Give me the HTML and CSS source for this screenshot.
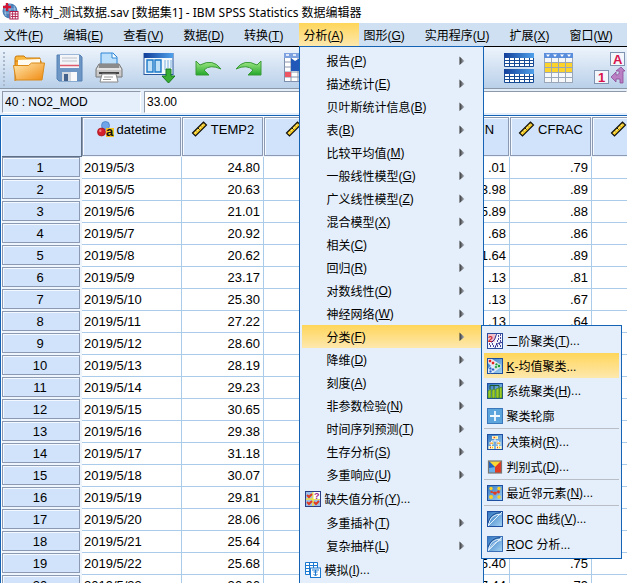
FILE: index.html
```html
<!DOCTYPE html>
<html lang="zh-CN">
<head>
<meta charset="utf-8">
<meta name="viewport" content="width=device-width, initial-scale=1.0">
<title>IBM SPSS Statistics 数据编辑器</title>
<link rel="stylesheet" href="styles.css">
</head>

<body>
<!-- Shared icons -->
<svg class="defs" aria-hidden="true">
	<defs>
		<linearGradient id="g-blue" x1="0" y1="0" x2="1" y2="1"><stop offset="0" stop-color="#2f74c0"/><stop offset="1" stop-color="#a5d4f4"/></linearGradient>
		<linearGradient id="g-head" x1="0" x2="1"><stop offset="0" stop-color="#123f9a"/><stop offset="1" stop-color="#4fa0ea"/></linearGradient>
		<linearGradient id="g-fold" x1="0" y1="0" x2="1" y2="1"><stop offset="0" stop-color="#ffe9b0"/><stop offset="1" stop-color="#f08a10"/></linearGradient>
		<linearGradient id="g-green" x1="0" y1="0" x2="0" y2="1"><stop offset="0" stop-color="#a6ea8a"/><stop offset="1" stop-color="#23a82a"/></linearGradient>
		<linearGradient id="g-arrow" x1="0" x2="1"><stop offset="0" stop-color="#333"/><stop offset="1" stop-color="#b5bcc6"/></linearGradient>
	</defs>
	<symbol id="ruler" viewBox="0 0 16 16">
		<path d="M1 12L12 1l3 3L4 15z" fill="#f9cc1c" stroke="#111" stroke-width="1.2"/>
		<path d="M4 9.500l1.500 1.500M6.500 7l1.500 1.500M9 4.500l1.500 1.500M11.300 2.500l1.200 1.200" stroke="#111"/>
		<path d="M3 12.500L12.500 3" stroke="#fff2a8" stroke-width=".7"/>
	</symbol>
	<symbol id="nominal" viewBox="0 0 17 16">
		<circle cx="8.500" cy="4.500" r="4" fill="#6fa5e8" stroke="#3f74bd" stroke-width=".7"/>
		<circle cx="4.500" cy="11" r="4" fill="#d3202c" stroke="#a31420" stroke-width=".7"/>
		<circle cx="3.300" cy="9.700" r="1.200" fill="#f0848a"/>
		<rect x="9" y="7" width="8" height="9" fill="#f4c224"/>
		<text class="glyph" x="9" y="15" font-size="13">a</text>
	</symbol>
	<symbol id="arrow" viewBox="0 0 6 10"><path d="M.5.500L5.500 5 .5 9z" fill="url(#g-arrow)"/></symbol>
</svg>

<header class="titlebar">
	<svg class="logo" viewBox="0 0 17 17">
		<circle cx="8" cy="8" r="7.500" fill="#4b7fb8"/>
		<path d="M2 6h12M2 10h12M8 1v14M4 3q-2 5 0 10M12 3q2 5 0 10" fill="none" stroke="#a9c8e6" stroke-width=".8"/>
		<path d="M5 0v8M1 4h8" stroke="#d41433" stroke-width="2.400"/>
		<rect x="8" y="8.500" width="8" height="7.500" fill="#fff" stroke="#b01d4c"/>
		<path d="M9 11h7M9 13.500h7M10.600 9v7M13.300 9v7" stroke="#b01d4c" stroke-width=".9"/>
	</svg>
	<h1>*陈村_测试数据.sav [数据集1] - IBM SPSS Statistics 数据编辑器</h1>
</header>

<nav class="menubar">
	<div class="entry"><button>文件(<u>F</u>)</button></div>
	<div class="entry"><button>编辑(<u>E</u>)</button></div>
	<div class="entry"><button>查看(<u>V</u>)</button></div>
	<div class="entry"><button>数据(<u>D</u>)</button></div>
	<div class="entry"><button>转换(<u>T</u>)</button></div>
	<div class="entry open">
		<button aria-expanded="true">分析(<u>A</u>)</button>
		<ul class="menu">
			<li><button>报告(<u>P</u>)<svg class="more"><use href="#arrow"/></svg></button></li>
			<li><button>描述统计(<u>E</u>)<svg class="more"><use href="#arrow"/></svg></button></li>
			<li><button>贝叶斯统计信息(<u>B</u>)<svg class="more"><use href="#arrow"/></svg></button></li>
			<li><button>表(<u>B</u>)<svg class="more"><use href="#arrow"/></svg></button></li>
			<li><button>比较平均值(<u>M</u>)<svg class="more"><use href="#arrow"/></svg></button></li>
			<li><button>一般线性模型(<u>G</u>)<svg class="more"><use href="#arrow"/></svg></button></li>
			<li><button>广义线性模型(<u>Z</u>)<svg class="more"><use href="#arrow"/></svg></button></li>
			<li><button>混合模型(<u>X</u>)<svg class="more"><use href="#arrow"/></svg></button></li>
			<li><button>相关(<u>C</u>)<svg class="more"><use href="#arrow"/></svg></button></li>
			<li><button>回归(<u>R</u>)<svg class="more"><use href="#arrow"/></svg></button></li>
			<li><button>对数线性(<u>O</u>)<svg class="more"><use href="#arrow"/></svg></button></li>
			<li><button>神经网络(<u>W</u>)<svg class="more"><use href="#arrow"/></svg></button></li>
			<li class="active">
				<button aria-expanded="true">分类(<u>F</u>)<svg class="more"><use href="#arrow"/></svg></button>
				<ul class="submenu">
					<li><button>
						<svg class="icon" viewBox="0 0 16 16"><rect x=".5" y=".5" width="15" height="15" fill="#f4f5fd" stroke="#2a4a9c"/><rect x="1" y="1" width="7" height="8" fill="#f3c0c8"/><text class="glyph red" x="1" y="8.500" font-size="9">2</text><path d="M11 3h1M13 2h1M11 6h1M13 5h1M10 8h1M13 8h1M2 11h1M5 11h1M3 13h1M6 13h1M9 11h1M12 11h1M10 13h1M13 13h1" stroke="#141480" stroke-width="1.300"/><path d="M9.500 1q-1 6-5 8.500M15 9.500q-6 0-7 5.500" fill="none" stroke="#141480" stroke-width=".9"/></svg>
						二阶聚类(<u>T</u>)...</button></li>
					<li class="active"><button>
						<svg class="icon" viewBox="0 0 16 16"><rect x=".5" y=".5" width="15" height="15" fill="url(#g-blue)" stroke="#1f4fa0"/><path d="M1 1h4l9 6v2l-8 6H1z" fill="#dceaf7"/><path d="M1 5l3 3-3 3z" fill="#4a8cd0"/><g stroke="#fff" stroke-width=".5"><circle cx="3" cy="3" r="1.700" fill="#e02424"/><circle cx="6" cy="5" r="1.700" fill="#e02424"/><circle cx="9.500" cy="6.500" r="1.500" fill="#1a9a3a"/><circle cx="12" cy="8" r="1.700" fill="#1a9a3a"/><circle cx="9" cy="9" r="1.500" fill="#1a9a3a"/><circle cx="3.500" cy="10.500" r="1.600" fill="#2a62c8"/><circle cx="6" cy="11.500" r="1.600" fill="#2a62c8"/><circle cx="3.500" cy="13.500" r="1.400" fill="#2a62c8"/></g></svg>
						<span><u>K</u>-均值聚类...</span></button></li>
					<li><button>
						<svg class="icon" viewBox="0 0 16 16"><rect x=".5" y=".5" width="15" height="15" fill="url(#g-blue)" stroke="#1f4fa0"/><path d="M3 6V2.500h9V5M7 2.500V6" fill="none" stroke="#1c5a2c"/><path d="M1 8l3-2v9H1zM5 7l3-1v9H5zM9 6l3-1v10H9zM12.500 5l2.500-1v11h-2.500z" fill="#9ccc2a" stroke="#3a7a18" stroke-width=".6"/></svg>
						系统聚类(<u>H</u>)...</button></li>
					<li><button>
						<svg class="icon" viewBox="0 0 16 16"><rect x=".5" y=".5" width="15" height="15" fill="#5ba4dc" stroke="#3a78bb"/><path d="M8 3v10M3 8h10" stroke="#f2f9ff" stroke-width="1.800"/></svg>
						聚类轮廓</button></li>
					<li class="sep"></li>
					<li><button>
						<svg class="icon" viewBox="0 0 16 16"><rect x=".5" y=".5" width="15" height="15" fill="url(#g-blue)" stroke="#1f4fa0"/><path d="M8 5v2M4.500 9V7h7v2M4.500 10v3M11.500 10v3" fill="none" stroke="#fff"/><path d="M5 2h6v3H5zM2.500 8h4v2.500h-4zM9.500 8h4v2.500h-4zM1.500 12h5.500v3H1.500zM9 12h5.500v3H9z" fill="#fff6c4"/><path d="M6.500 3.500h1.500M3.500 9.300h1M10.500 9.300h1M3 13.500h1M10 13.500h1" stroke="#e84a12" stroke-width="1.400"/><path d="M8.500 3.500h1M5 9.300h1M12 9.300h1M5 13.500h1M12 13.500h1" stroke="#f6c51a" stroke-width="1.400"/></svg>
						决策树(<u>R</u>)...</button></li>
					<li><button>
						<svg class="icon" viewBox="0 0 16 16"><rect x="2" y="2" width="6" height="12" fill="#1f63c4"/><rect x="8" y="2" width="6" height="12" fill="#e23b22"/><path d="M2 2h12L8 8z" fill="#fbd832"/><path d="M2 9l6-1v6H2z" fill="#69aee6"/><rect x="1.500" y="2" width="13" height="12" fill="none" stroke="#777" stroke-width="1.200"/></svg>
						判别式(<u>D</u>)...</button></li>
					<li class="sep"></li>
					<li><button>
						<svg class="icon" viewBox="0 0 16 16"><rect x=".5" y=".5" width="15" height="15" fill="url(#g-blue)" stroke="#1f4fa0"/><path d="M5 7l3 1 4-2" fill="none" stroke="#e23b22"/><g fill="#fbd126"><circle cx="4" cy="3.500" r="1.700"/><circle cx="12" cy="3.500" r="1.700"/><circle cx="4" cy="12" r="2"/><circle cx="12" cy="12" r="1.700"/></g><circle cx="8" cy="8.200" r="1.600" fill="#e23b22"/><circle cx="4.500" cy="7" r="1.100" fill="#e23b22"/><circle cx="11.500" cy="7" r="1.400" fill="#e23b22"/></svg>
						最近邻元素(<u>N</u>)...</button></li>
					<li class="sep"></li>
					<li><button>
						<svg class="icon" viewBox="0 0 16 16"><rect x=".5" y=".5" width="15" height="15" fill="url(#g-blue)" stroke="#1f4fa0"/><path d="M1 15L15 1M1.500 14Q3 3 14.500 3" fill="none" stroke="#e4f2fc"/><path d="M1 12Q3 2 14 1.500" fill="none" stroke="#1b4c90"/></svg>
						ROC 曲线(<u>V</u>)...</button></li>
					<li><button>
						<svg class="icon" viewBox="0 0 16 16"><rect x=".5" y=".5" width="15" height="15" fill="url(#g-blue)" stroke="#3a70b8"/><path d="M1 15L15 1M1.500 14Q3 3 14.500 3M1.500 14Q6 6 14.500 4" fill="none" stroke="#e4f2fc" stroke-width=".9"/><path d="M1 11Q4 2 13 1.500" fill="none" stroke="#1b4c90"/></svg>
						<span><u>R</u>OC 分析...</span></button></li>
				</ul>
			</li>
			<li><button>降维(<u>D</u>)<svg class="more"><use href="#arrow"/></svg></button></li>
			<li><button>刻度(<u>A</u>)<svg class="more"><use href="#arrow"/></svg></button></li>
			<li><button>非参数检验(<u>N</u>)<svg class="more"><use href="#arrow"/></svg></button></li>
			<li><button>时间序列预测(<u>T</u>)<svg class="more"><use href="#arrow"/></svg></button></li>
			<li><button>生存分析(<u>S</u>)<svg class="more"><use href="#arrow"/></svg></button></li>
			<li><button>多重响应(<u>U</u>)<svg class="more"><use href="#arrow"/></svg></button></li>
			<li class="with-icon"><button>
				<svg class="icon" viewBox="0 0 16 16"><rect x=".5" y=".5" width="15" height="15" fill="#9cc0ea" stroke="#2a3f86"/><path d="M1 8h14M8 1v14" stroke="#f5e23c" stroke-width="1.500"/><path d="M2 4l2 2 3-3M2 11l2 2 3-3M9 11l2 2 3-3" fill="none" stroke="#e03a22" stroke-width="2"/><rect x="8.500" y="1" width="6.500" height="7" fill="#fff"/><text class="glyph purple" x="9" y="7.500" font-size="9">?</text></svg>
				缺失值分析(<u>Y</u>)...</button></li>
			<li><button>多重插补(<u>T</u>)<svg class="more"><use href="#arrow"/></svg></button></li>
			<li><button>复杂抽样(<u>L</u>)<svg class="more"><use href="#arrow"/></svg></button></li>
			<li class="with-icon"><button>
				<svg class="icon" viewBox="0 0 16 16"><path d="M.5.500h12v12H.5zM.5 3.500h12M.5 6.500h12M.5 9.500h12M4.500.500v12M8.500.500v12" fill="#fff" stroke="#1a78d0"/><rect x="5.500" y="6" width="10" height="9.500" fill="#fff" stroke="#1a78d0"/><path d="M7 8h7M8.500 10h4M10.500 8v5.500M8.500 12l2 2 2-2" fill="none" stroke="#1a78d0"/></svg>
				模拟(<u>I</u>)...</button></li>
		</ul>
	</div>
	<div class="entry"><button>图形(<u>G</u>)</button></div>
	<div class="entry"><button>实用程序(<u>U</u>)</button></div>
	<div class="entry"><button>扩展(<u>X</u>)</button></div>
	<div class="entry"><button>窗口(<u>W</u>)</button></div>
</nav>

<div class="toolbar">
	<div class="grip"></div>
	<div class="group">
		<button aria-label="打开"><svg viewBox="0 0 32 32"><path d="M2 9V6q0-2 2-2h7l2 2h14v5" fill="#f9b840" stroke="#c9780a"/><path d="M2 29V9h26v4" fill="#f6a42a" stroke="#c9780a"/><path d="M5 8l22-1v6H5z" fill="#fffaf0"/><path d="M.5 13.500h15l3-2.500h13L29 28H3z" fill="url(#g-fold)" stroke="#d98a18"/></svg></button>
		<button aria-label="保存"><svg viewBox="0 0 32 32"><path d="M4 3h23l2 2v24H6l-2-2z" fill="#6e96c4" stroke="#5580b4"/><rect x="7" y="3" width="19" height="13" fill="#f3f5f8"/><path d="M9 6h15M9 9h15" stroke="#bcc3cc"/><path d="M7 13.500h19" stroke="#e05a6e" stroke-width="1.500"/><rect x="9" y="20" width="15" height="9" fill="#d3d9e0"/><rect x="11" y="22" width="4" height="7" fill="#42628c"/><rect x="18" y="20" width="6" height="9" fill="#f6f8fa"/></svg></button>
		<button aria-label="打印"><svg viewBox="0 0 32 32"><path d="M8 14V1h12l4 4v9z" fill="#bce0fb" stroke="#2f86d6"/><path d="M19 1v5h5" fill="#fff" stroke="#2f86d6"/><path d="M6 12h20l3 5v8H3v-8z" fill="#c9c9c9" stroke="#777"/><path d="M4 17h24" stroke="#fff"/><path d="M6 12v4h20v-4" fill="#8b8b8b"/><path d="M6 21h20" stroke="#444" stroke-width="2"/><path d="M9 22h14l2 8H7z" fill="#fff" stroke="#888"/><path d="M11 25h9M10 27.500h8" stroke="#999"/></svg></button>
	</div>
	<div class="group">
		<button aria-label="调用"><svg viewBox="0 0 32 32"><rect x="1" y="1.500" width="29" height="21" fill="#f3f8fd" stroke="#2858a0"/><rect x="1" y="1" width="29" height="5" fill="url(#g-head)"/><path d="M4 8h6v12H4zM12 8h6v12h-6z" fill="#c0e0f8" stroke="#1a78c8" stroke-width="1.400"/><path d="M22 8v10M25 8v8M28 8v8" stroke="#7cb0dd"/><path d="M23 17h5v7h4l-6.500 7-6.500-7h4z" fill="#3aad34" stroke="#187a20"/></svg></button>
	</div>
	<div class="group">
		<button aria-label="撤销"><svg viewBox="0 0 32 32"><path d="M3 9v14h13l-5-5q6-6 17-1Q20 6 7 13z" fill="url(#g-green)" stroke="#3a9a38"/></svg></button>
		<button aria-label="重做"><svg viewBox="0 0 32 32"><path d="M28 9v14H15l5-5q-6-6-17-1Q11 6 24 13z" fill="url(#g-green)" stroke="#3a9a38"/></svg></button>
	</div>
	<div class="group">
		<button aria-label="转到个案"><svg viewBox="0 0 32 32"><rect x="1.500" y="1.500" width="29" height="28" fill="#fff" stroke="#7d8fae"/><rect x="1" y="1" width="30" height="5" fill="#7ea2e0"/><path d="M3 3h3M10 3h3M17 3h3" stroke="#fff" stroke-width="1.500"/><path d="M1 10h30M1 15h30M1 20h30M1 25h30M8 6v24M15 6v24" stroke="#8996ac"/><rect x="2" y="20" width="6" height="5" fill="#ef5664"/><path d="M8 6l4 3 5-3v13H8z" fill="#2258b8"/></svg></button>
		<button aria-label="转到变量"></button>
		<button aria-label="变量"></button>
		<button aria-label="描述统计"></button>
	</div>
	<div class="group">
		<button aria-label="查找"></button>
	</div>
	<div class="group">
		<button aria-label="拆分文件"><svg viewBox="0 0 32 32"><path d="M1.500 1.500h29v13h-29zM1.500 17.500h29v13h-29z" fill="#fff" stroke="#174a94"/><path d="M1 1h30v5H1zM1 17h30v5H1z" fill="url(#g-head)"/><path d="M2 8.500h28M2 11.500h28M6.500 6v9M11.500 6v9M16.500 6v9M21.500 6v9M26.500 6v9M2 24.500h28M2 27.500h28M6.500 22v9M11.500 22v9M16.500 22v9M21.500 22v9M26.500 22v9" stroke="#174a94"/></svg></button>
		<button aria-label="选择个案"><svg viewBox="0 0 32 32"><rect x="1" y="1" width="29" height="30" fill="#f6f7f9"/><rect x="1" y="1" width="29" height="5" fill="#5a8edc"/><path d="M3 2.500h4l-2 2.500zM10 2.500h4L12 5zM17 2.500h4L19 5zM24 2.500h4L26 5z" fill="#fff"/><rect x="1" y="11" width="29" height="10" fill="#fbd32a"/><path d="M1.500 6v25M8.500 6v25M15.500 6v25M22.500 6v25M29.500 6v25M1 10.500h29M1 15.500h29M1 20.500h29M1 25.500h29M1 30.500h29" stroke="#9aa7b8"/></svg></button>
	</div>
	<div class="group">
		<button aria-label="值标签"><svg viewBox="0 0 32 32"><rect x="17.500" y=".5" width="14" height="13" fill="#f3f6fa" stroke="#7f92b0"/><text class="glyph pink" x="20" y="12" font-size="13">A</text><rect x="1.500" y="18.500" width="14" height="13" fill="#f3f6fa" stroke="#7f92b0"/><text class="glyph pink" x="5" y="30" font-size="13">1</text><path d="M18 25l5-5v3q4 0 3-4h-3l5-4 4 4h-2v12h-3v-4h-4v3z" fill="#bb7fc4" stroke="#8a4c98" stroke-width=".8"/></svg></button>
	</div>
</div>

<div class="cellbar">
	<input class="cell-name" type="text" value="40 : NO2_MOD" aria-label="单元格" readonly>
	<input class="cell-value" type="text" value="33.00" aria-label="值">
</div>

<main class="sheet">
	<table>
		<colgroup><col class="c-num"><col class="c-date"><col><col><col><col><col><col></colgroup>
		<thead>
			<tr>
				<td class="corner"></td>
				<th><svg class="type"><use href="#nominal"/></svg>datetime</th>
				<th><svg class="type"><use href="#ruler"/></svg>TEMP2</th>
				<th><svg class="type"><use href="#ruler"/></svg>&nbsp;&nbsp;&nbsp;&nbsp;&nbsp;</th>
				<th></th>
				<th><svg class="type"><use href="#ruler"/></svg>RAIN</th>
				<th><svg class="type"><use href="#ruler"/></svg>CFRAC</th>
				<th><svg class="type"><use href="#ruler"/></svg>&nbsp;&nbsp;&nbsp;&nbsp;&nbsp;&nbsp;&nbsp;</th>
			</tr>
		</thead>
		<tbody>
			<tr><th>1</th><td>2019/5/3</td><td>24.80</td><td></td><td></td><td>.01</td><td>.79</td><td></td></tr>
			<tr><th>2</th><td>2019/5/5</td><td>20.63</td><td></td><td></td><td>3.98</td><td>.89</td><td></td></tr>
			<tr><th>3</th><td>2019/5/6</td><td>21.01</td><td></td><td></td><td>5.89</td><td>.88</td><td></td></tr>
			<tr><th>4</th><td>2019/5/7</td><td>20.92</td><td></td><td></td><td>.68</td><td>.86</td><td></td></tr>
			<tr><th>5</th><td>2019/5/8</td><td>20.62</td><td></td><td></td><td>1.64</td><td>.89</td><td></td></tr>
			<tr><th>6</th><td>2019/5/9</td><td>23.17</td><td></td><td></td><td>.13</td><td>.81</td><td></td></tr>
			<tr><th>7</th><td>2019/5/10</td><td>25.30</td><td></td><td></td><td>.13</td><td>.67</td><td></td></tr>
			<tr><th>8</th><td>2019/5/11</td><td>27.22</td><td></td><td></td><td>.13</td><td>.64</td><td></td></tr>
			<tr><th>9</th><td>2019/5/12</td><td>28.60</td><td></td><td></td><td></td><td></td><td></td></tr>
			<tr><th>10</th><td>2019/5/13</td><td>28.19</td><td></td><td></td><td></td><td></td><td></td></tr>
			<tr><th>11</th><td>2019/5/14</td><td>29.23</td><td></td><td></td><td></td><td></td><td></td></tr>
			<tr><th>12</th><td>2019/5/15</td><td>30.65</td><td></td><td></td><td></td><td></td><td></td></tr>
			<tr><th>13</th><td>2019/5/16</td><td>29.38</td><td></td><td></td><td></td><td></td><td></td></tr>
			<tr><th>14</th><td>2019/5/17</td><td>31.18</td><td></td><td></td><td></td><td></td><td></td></tr>
			<tr><th>15</th><td>2019/5/18</td><td>30.07</td><td></td><td></td><td></td><td></td><td></td></tr>
			<tr><th>16</th><td>2019/5/19</td><td>29.81</td><td></td><td></td><td></td><td></td><td></td></tr>
			<tr><th>17</th><td>2019/5/20</td><td>28.06</td><td></td><td></td><td></td><td></td><td></td></tr>
			<tr><th>18</th><td>2019/5/21</td><td>25.64</td><td></td><td></td><td></td><td></td><td></td></tr>
			<tr><th>19</th><td>2019/5/22</td><td>25.68</td><td></td><td></td><td>5.40</td><td>.75</td><td></td></tr>
			<tr><th>20</th><td>2019/5/23</td><td>26.06</td><td></td><td></td><td>7.44</td><td>.79</td><td></td></tr>
		</tbody>
	</table>
</main>
</body>
</html>
```

FILE: styles.css
```css
* {
	box-sizing: border-box;
}

body {
	margin: 0;
	height: 100vh;
	display: flex;
	flex-direction: column;
	overflow: hidden;
	background-color: #e4effb;
	color: #000;
	font-family: "Liberation Sans", "Noto Sans CJK SC", sans-serif;
	font-size: 12px;
}

button {
	margin: 0;
	padding: 0;
	border: none;
	background: none;
	color: inherit;
	font: inherit;
	text-align: left;
	white-space: nowrap;
}

ul {
	list-style: none;
	margin: 0;
	padding: 0;
}

.defs {
	position: absolute;
	width: 0;
	height: 0;
}

/* Letters inside icons */
.glyph {
	font-weight: bold;
	fill: #111;
}

.glyph.red {
	fill: #c81e2c;
}

.glyph.purple {
	fill: #a0248c;
}

.glyph.pink {
	fill: #d8124c;
}

/* Title */
.titlebar {
	display: flex;
	align-items: center;
	flex: none;
	gap: 4px;
	height: 23px;
	padding-left: 2px;
	background-color: #fff;
}

.titlebar h1 {
	margin: 0;
	font: 12px "Noto Sans", "Noto Sans CJK SC", sans-serif;
	white-space: nowrap;
}

.logo {
	width: 17px;
	height: 17px;
}

/* Menus */
.menubar {
	display: flex;
	flex: none;
	height: 24px;
	background-color: #cfe0f2;
	border-bottom: 1px solid #000;
}

.entry {
	position: relative;
}

.entry > button {
	display: block;
	height: 23px;
	padding: 0 16px 0 4px;
}

.entry.open > button,
.menu .active > button {
	background: linear-gradient(#ffd65a, #fde8ae);
}

.menu,
.submenu {
	position: absolute;
	z-index: 1;
	background-color: #e4effb;
	border: 1px solid #1463b4;
}

.menu {
	top: 100%;
	left: 0;
	width: 185px;
	padding: 2px;
}

.menu li {
	position: relative;
}

.menu li button {
	display: flex;
	align-items: center;
	width: 100%;
	height: 23px;
	padding: 0 16px 0 24px;
}

.menu li.with-icon button {
	height: 25px;
	padding-left: 3px;
}

.more {
	width: 6px;
	height: 10px;
	margin-left: auto;
}

.icon {
	flex: none;
	width: 16px;
	height: 16px;
	margin-right: 3px;
}

.submenu {
	top: 0;
	left: 100%;
	width: 141px;
	padding: 2px;
}

.menu .submenu button {
	height: 25px;
	padding: 0 3px;
}

.submenu .sep {
	height: 1px;
	background-color: #b9bec6;
}

/* Toolbar */
.toolbar {
	display: flex;
	flex: none;
	gap: 18px;
	height: 42px;
	padding-top: 5px;
	background: linear-gradient(#edf4fc, #b9d0e9);
	border-bottom: 1px solid #8b98a8;
	overflow: hidden;
}

.grip {
	flex: none;
	width: 2px;
	height: 34px;
	margin: 0 -10px 0 3px;
	background: repeating-linear-gradient(#a9b8cb 0 2px, transparent 2px 4px);
}

.group {
	display: flex;
	flex: none;
	gap: 8px;
}

.group button,
.group svg {
	display: block;
	width: 32px;
	height: 32px;
}

/* Current cell */
.cellbar {
	display: flex;
	flex: none;
	gap: 3px;
	padding: 2px 0 2px 2px;
}

.cellbar input {
	height: 22px;
	padding: 0 2px;
	border: 1px solid #fff;
	border-top-color: #8d99a8;
	border-left-color: #8d99a8;
	border-radius: 0;
	font: inherit;
}

.cell-name {
	width: 139px;
	background-color: #e4effb;
}

.cell-value {
	flex: 1;
	background-color: #fff;
}

/* Data */
.sheet {
	flex: 1;
	min-height: 0;
	overflow: hidden;
	border: 1px solid #1463b4;
	border-width: 1px 0 0 1px;
	padding: 1px 0 0 1px;
	background-color: #fff;
	font-size: 13px;
}

table {
	width: 672px;
	table-layout: fixed;
	border-collapse: separate;
	border-spacing: 0;
}

.c-num {
	width: 80px;
}

.c-date {
	width: 100px;
}

th {
	padding: 0;
	font-weight: normal;
	background-color: #d0e3fb;
	border: 0 solid #eef5fd;
	box-shadow: inset 0 0 0 1px #8c99b2, inset 2px 2px #f4f9ff;
	white-space: nowrap;
}

thead th,
.corner {
	height: 40px;
}

thead th {
	padding-top: 4px;
	border-width: 0 1px 1px 0;
	vertical-align: top;
	line-height: 17px;
}

.corner {
	background-color: #d0e3fb;
	border: 1px solid #5f6f86;
	border-width: 0 1px 1px 0;
}

.type {
	width: 17px;
	height: 16px;
	margin-right: 3px;
	vertical-align: top;
}

tbody th,
tbody td {
	height: 22px;
	line-height: 18px;
}

tbody th {
	padding-top: 1px;
	padding-right: 2px;
	border-width: 0 2px 2px 0;
}

tbody td {
	padding: 0 3px 0 2px;
	border: 1px solid #abcbea;
	border-width: 0 1px 1px 0;
	text-align: right;
}

tbody td:nth-child(2) {
	text-align: left;
}
```
